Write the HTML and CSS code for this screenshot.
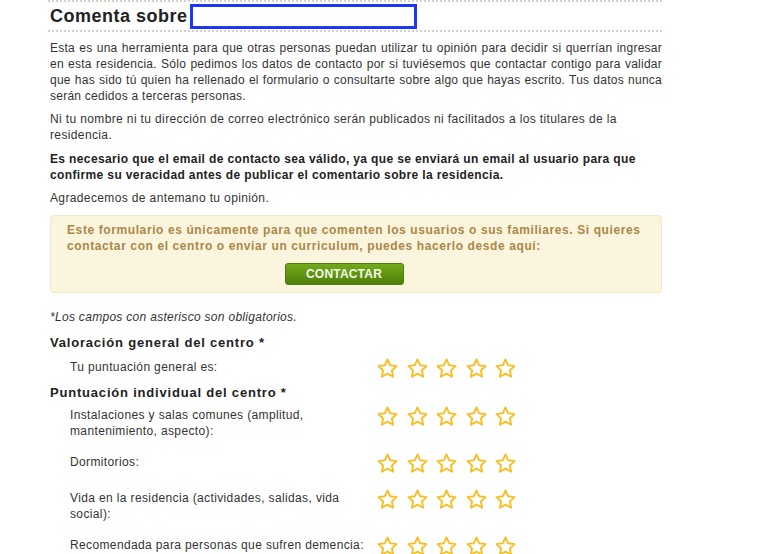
FILE: index.html
```html
<!DOCTYPE html>
<html lang="es">

<head>
    <meta charset="UTF-8">
    <meta name="viewport" content="width=device-width, initial-scale=1.0">
    <title>Comenta sobre la residencia</title>
    <link rel="stylesheet" href="styles.css">
</head>

<body>
    <svg class="defs" width="0" height="0">
        <symbol id="star" viewBox="0 0 24 24">
            <path d="M12 2.6l2.85 6.05 6.6.85-4.85 4.55 1.25 6.55L12 17.35 6.15 20.6l1.25-6.55L2.55 9.5l6.6-.85z"
                fill="none" stroke="#f6bf26" stroke-width="2" stroke-linejoin="round" />
        </symbol>
    </svg>

    <div class="page">
        <div class="title-bar">
            <h2 class="title">Comenta sobre</h2>
            <input class="title-input" type="text">
        </div>

        <p class="text intro">Esta es una herramienta para que otras personas puedan utilizar tu opinión para decidir si querrían ingresar en esta residencia. Sólo pedimos los datos de contacto por si tuviésemos que contactar contigo para validar que has sido tú quien ha rellenado el formulario o consultarte sobre algo que hayas escrito. Tus datos nunca serán cedidos a terceras personas.</p>
        <p class="text">Ni tu nombre ni tu dirección de correo electrónico serán publicados ni facilitados a los titulares de la residencia.</p>
        <p class="text strong">Es necesario que el email de contacto sea válido, ya que se enviará un email al usuario para que confirme su veracidad antes de publicar el comentario sobre la residencia.</p>
        <p class="text">Agradecemos de antemano tu opinión.</p>

        <div class="notice">
            <p class="notice-text">Este formulario es únicamente para que comenten los usuarios o sus familiares. Si quieres contactar con el centro o enviar un curriculum, puedes hacerlo desde aquí:</p>
            <div class="notice-action">
                <button class="btn-green">CONTACTAR</button>
            </div>
        </div>

        <p class="required">*Los campos con asterisco son obligatorios.</p>

        <h3 class="section">Valoración general del centro *</h3>
        <div class="rate-row general">
            <span class="rate-label">Tu puntuación general es:</span>
            <span class="stars">
                <svg><use href="#star" /></svg><svg><use href="#star" /></svg><svg><use href="#star" /></svg><svg><use href="#star" /></svg><svg><use href="#star" /></svg>
            </span>
        </div>

        <h3 class="section second">Puntuación individual del centro *</h3>
        <div class="rate-list">
            <div class="rate-row">
                <span class="rate-label">Instalaciones y salas comunes (amplitud, mantenimiento, aspecto):</span>
                <span class="stars">
                    <svg><use href="#star" /></svg><svg><use href="#star" /></svg><svg><use href="#star" /></svg><svg><use href="#star" /></svg><svg><use href="#star" /></svg>
                </span>
            </div>
            <div class="rate-row">
                <span class="rate-label">Dormitorios:</span>
                <span class="stars">
                    <svg><use href="#star" /></svg><svg><use href="#star" /></svg><svg><use href="#star" /></svg><svg><use href="#star" /></svg><svg><use href="#star" /></svg>
                </span>
            </div>
            <div class="rate-row">
                <span class="rate-label">Vida en la residencia (actividades, salidas, vida social):</span>
                <span class="stars">
                    <svg><use href="#star" /></svg><svg><use href="#star" /></svg><svg><use href="#star" /></svg><svg><use href="#star" /></svg><svg><use href="#star" /></svg>
                </span>
            </div>
            <div class="rate-row">
                <span class="rate-label">Recomendada para personas que sufren demencia:</span>
                <span class="stars">
                    <svg><use href="#star" /></svg><svg><use href="#star" /></svg><svg><use href="#star" /></svg><svg><use href="#star" /></svg><svg><use href="#star" /></svg>
                </span>
            </div>
        </div>
    </div>
</body>

</html>
```

FILE: styles.css
```css
* {
    margin: 0;
    padding: 0;
    box-sizing: border-box;
}

body {
    background-color: #ffffff;
    font-family: "Liberation Sans", Arial, Helvetica, sans-serif;
    color: #333333;
}

.defs {
    position: absolute;
}

.page {
    width: 614px;
    margin-left: 48px;
}

.title-bar {
    display: flex;
    align-items: center;
    height: 32px;
    border-top: 2px dotted #d2d2c6;
    border-bottom: 2px dotted #d2d2c6;
    padding-left: 2px;
}

.title {
    font-size: 18px;
    font-weight: bold;
    color: #222222;
    letter-spacing: 0.5px;
}

.title-input {
    width: 227px;
    height: 25px;
    margin-left: 2px;
    border: 3px solid #1d36f2;
    background: #ffffff;
    outline: none;
}

.text {
    font-size: 12px;
    line-height: 16px;
    letter-spacing: 0.37px;
    margin-top: 7.5px;
    margin-right: -4px;
    padding-left: 2px;
}

.intro {
    text-align: justify;
    letter-spacing: 0.25px;
    margin-right: 0;
}

.strong {
    font-weight: bold;
    color: #222222;
}

.notice {
    margin-top: 9px;
    margin-left: 2px;
    background-color: #fbf5dd;
    border: 1px solid #f1e8c6;
    border-radius: 4px;
    padding: 6px 10px 7px 16px;
}

.notice-text {
    font-size: 12px;
    line-height: 16px;
    letter-spacing: 0.6px;
    font-weight: bold;
    color: #ad8648;
}

.notice-action {
    display: flex;
    justify-content: center;
    margin-top: 9px;
    padding-right: 30px;
}

.btn-green {
    width: 119px;
    height: 22px;
    border: 1px solid #4c7a0c;
    border-radius: 3px;
    background: linear-gradient(#72ab1a, #4f8009);
    color: #f3f7e8;
    font-family: "Liberation Sans", Arial, sans-serif;
    font-size: 12px;
    font-weight: bold;
    letter-spacing: 0.2px;
}

.required {
    margin-top: 17px;
    padding-left: 2px;
    font-size: 12px;
    line-height: 14px;
    letter-spacing: 0.3px;
    font-style: italic;
    color: #333333;
}

.section {
    margin-top: 10.5px;
    padding-left: 2px;
    font-size: 13px;
    line-height: 15px;
    font-weight: bold;
    letter-spacing: 0.8px;
    color: #222222;
}

.section.second {
    margin-top: 4.5px;
}

.rate-list {
    display: flex;
    flex-direction: column;
    gap: 14px;
    margin-top: 6px;
}

.rate-row {
    display: flex;
    align-items: flex-start;
    padding-left: 22px;
}

.rate-row.general {
    margin-top: 8.5px;
}

.rate-label {
    width: 306px;
    font-size: 12px;
    line-height: 16px;
    letter-spacing: 0.37px;
    padding-top: 1px;
}

.stars {
    display: flex;
    gap: 6.5px;
    margin-top: -1px;
}

.stars svg {
    width: 23px;
    height: 23px;
}
```
